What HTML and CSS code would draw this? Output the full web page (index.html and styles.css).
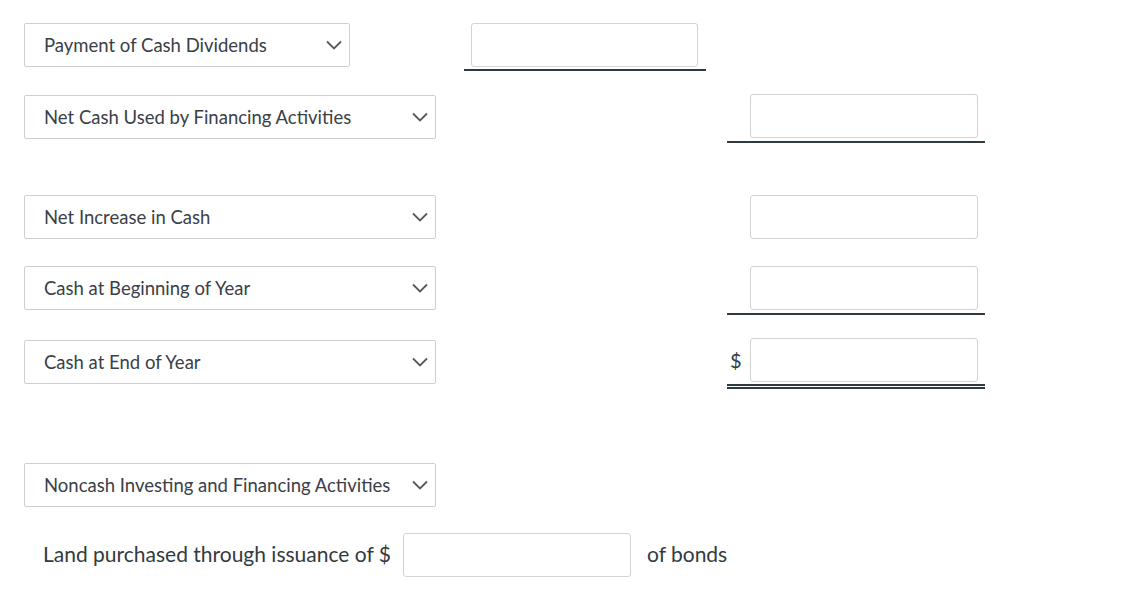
FILE: index.html
```html
<!DOCTYPE html>
<html>
<head>
<meta charset="utf-8">
<link rel="stylesheet" href="styles.css">
</head>
<body>
<div class="sheet">
  <div class="row r1">
    <div class="select narrow"><span>Payment of Cash Dividends</span><svg class="chev" viewBox="0 0 16 10"><path d="M1 1.5 L8 8.5 L15 1.5" /></svg></div>
    <div class="cell c1 single"><div class="box"></div></div>
  </div>
  <div class="row r2">
    <div class="select wide s-off1"><span>Net Cash Used by Financing Activities</span><svg class="chev" viewBox="0 0 16 10"><path d="M1 1.5 L8 8.5 L15 1.5" /></svg></div>
    <div class="cell c2 single"><div class="box"></div></div>
  </div>
  <div class="row r3">
    <div class="select wide"><span>Net Increase in Cash</span><svg class="chev" viewBox="0 0 16 10"><path d="M1 1.5 L8 8.5 L15 1.5" /></svg></div>
    <div class="cell c2 plain"><div class="box"></div></div>
  </div>
  <div class="row r4">
    <div class="select wide"><span>Cash at Beginning of Year</span><svg class="chev" viewBox="0 0 16 10"><path d="M1 1.5 L8 8.5 L15 1.5" /></svg></div>
    <div class="cell c2 single"><div class="box"></div></div>
  </div>
  <div class="row r5">
    <div class="select wide s-off2"><span>Cash at End of Year</span><svg class="chev" viewBox="0 0 16 10"><path d="M1 1.5 L8 8.5 L15 1.5" /></svg></div>
    <div class="cell c2 double"><span class="dollar">$</span><div class="box"></div></div>
  </div>
  <div class="row r6">
    <div class="select wide"><span>Noncash Investing and Financing Activities</span><svg class="chev" viewBox="0 0 16 10"><path d="M1 1.5 L8 8.5 L15 1.5" /></svg></div>
  </div>
  <div class="row r7 sentence">
    <span class="lead">Land purchased through issuance of $</span>
    <div class="box inline"></div>
    <span class="tail">of bonds</span>
  </div>
</div>
</body>
</html>
```

FILE: styles.css
```css
html, body {
  margin: 0;
  padding: 0;
  background: #ffffff;
}
body {
  font-family: Lato, "Open Sans", "Liberation Sans", sans-serif;
  color: #333a40;
}
.sheet {
  padding: 0 0 0 24px;
  display: flex;
  flex-direction: column;
}
.row {
  display: flex;
  align-items: flex-start;
}
.r1 { margin-top: 23px; }
.r2 { margin-top: 23px; }
.r3 { margin-top: 52px; }
.r4 { margin-top: 27px; }
.r5 { margin-top: 23px; }
.r6 { margin-top: 74px; }
.r7 { margin-top: 26px; }

.select {
  box-sizing: border-box;
  height: 44px;
  border: 1px solid #cfcfcf;
  border-radius: 2px;
  display: flex;
  align-items: center;
  justify-content: space-between;
  padding: 0 7px 0 19px;
  font-size: 18.5px;
  color: #3a4047;
  background: #fff;
}
.narrow { width: 326px; }
.wide { width: 412px; }
.s-off1 { margin-top: 1px; }
.s-off2 { margin-top: 2px; }
.chev {
  width: 16px;
  height: 10px;
  fill: none;
  stroke: #555a60;
  stroke-width: 1.8;
}

.box {
  box-sizing: border-box;
  width: 228px;
  height: 44px;
  border: 1px solid #d3d3d3;
  border-radius: 3px;
  background: #fff;
}

.cell {
  box-sizing: border-box;
  display: flex;
  align-items: center;
}
.c1 {
  width: 242px;
  margin-left: 114px;
  padding: 0 8px 2px 7px;
}
.c2 {
  width: 258px;
  margin-left: 291px;
  padding: 0 7px 0 0;
  justify-content: flex-end;
}
.single {
  border-bottom: 2px solid #2e3a40;
}
.c2.single { padding-bottom: 3px; }
.plain { border-bottom: none; }
.double {
  padding-bottom: 2px;
  border-bottom: 5px double #2e3a40;
  justify-content: space-between;
}
.dollar {
  font-size: 20px;
  color: #333a40;
  padding-left: 3px;
}

.sentence {
  align-items: center;
  font-size: 21px;
}
.lead { margin-left: 19px; margin-bottom: 4px; }
.box.inline { margin-left: 12px; }
.tail { margin-left: 16px; margin-bottom: 4px; }
```
